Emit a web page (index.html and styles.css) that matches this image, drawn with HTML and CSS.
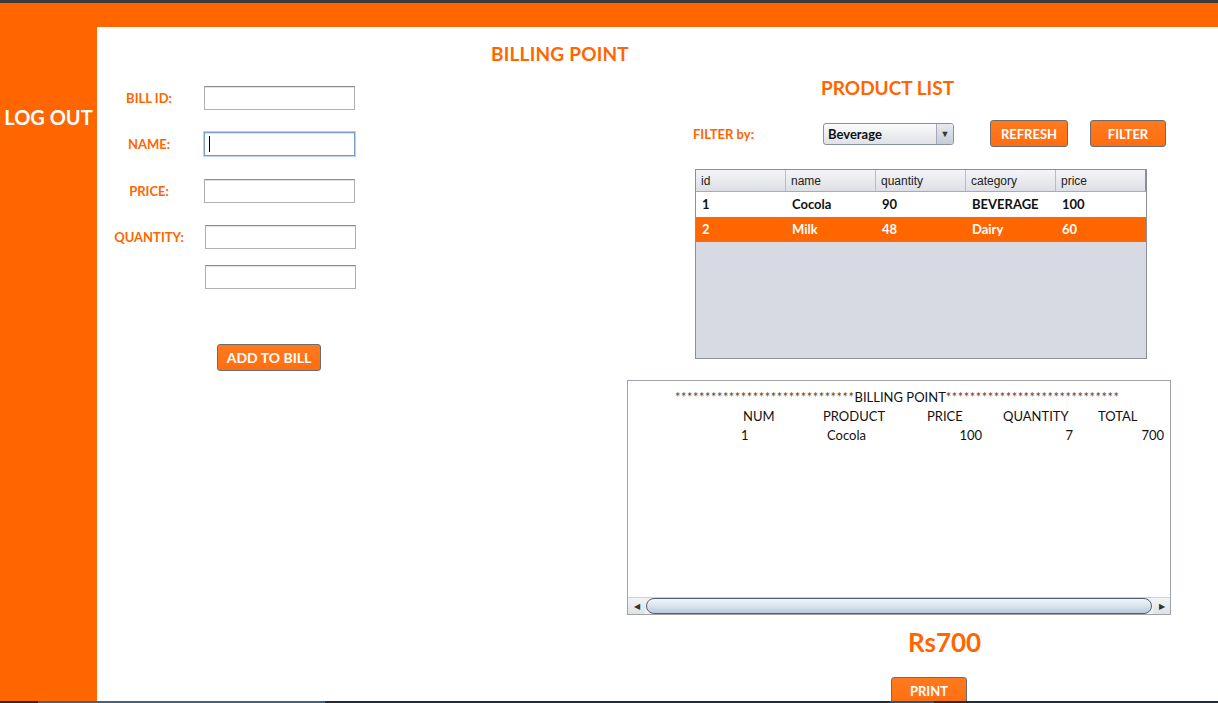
FILE: index.html
```html
<!DOCTYPE html>
<html>
<head>
<meta charset="utf-8">
<title>Billing Point</title>
<link rel="stylesheet" href="styles.css">
</head>
<body>
<div class="topbar"></div>
<div class="header"></div>
<div class="main">
  <aside class="sidebar">
    <div class="logout">LOG OUT</div>
  </aside>
  <section class="content">
    <div class="left-col">
      <h1 class="title">BILLING POINT</h1>
      <div class="form">
        <div class="row r1">
          <label class="lbl">BILL ID:</label>
          <div class="field"></div>
        </div>
        <div class="row r2">
          <label class="lbl">NAME:</label>
          <div class="field focused"><span class="caret"></span></div>
        </div>
        <div class="row r3">
          <label class="lbl">PRICE:</label>
          <div class="field"></div>
        </div>
        <div class="row r4">
          <label class="lbl">QUANTITY:</label>
          <div class="field shift"></div>
        </div>
        <div class="row r5">
          <span class="lbl"></span>
          <div class="field shift"></div>
        </div>
      </div>
      <button class="btn add-btn">ADD TO BILL</button>
    </div>

    <div class="right-col">
      <h2 class="subtitle">PRODUCT LIST</h2>
      <div class="filter-row">
        <span class="filter-lbl">FILTER by:</span>
        <div class="combo">
          <span class="combo-text">Beverage</span>
          <span class="combo-arrow">&#9660;</span>
        </div>
        <button class="btn refresh-btn">REFRESH</button>
        <button class="btn filter-btn">FILTER</button>
      </div>

      <div class="table">
        <div class="thead">
          <div class="th">id</div>
          <div class="th">name</div>
          <div class="th">quantity</div>
          <div class="th">category</div>
          <div class="th">price</div>
        </div>
        <div class="tr">
          <div class="td">1</div>
          <div class="td">Cocola</div>
          <div class="td">90</div>
          <div class="td">BEVERAGE</div>
          <div class="td">100</div>
        </div>
        <div class="tr selected">
          <div class="td">2</div>
          <div class="td">Milk</div>
          <div class="td">48</div>
          <div class="td">Dairy</div>
          <div class="td">60</div>
        </div>
      </div>

      <div class="bill">
        <div class="bill-body">
          <div class="stars-line">
            <span class="stars">******************************</span><span class="bill-title">BILLING POINT</span><span class="stars">*****************************</span>
          </div>
          <div class="bill-grid">
            <span></span>
            <span class="h-num">NUM</span>
            <span class="h-prod">PRODUCT</span>
            <span class="h-price">PRICE</span>
            <span class="h-qty">QUANTITY</span>
            <span class="h-total">TOTAL</span>
            <span></span>
            <span class="v-num">1</span>
            <span class="v-prod">Cocola</span>
            <span class="v-price">100</span>
            <span class="v-qty">7</span>
            <span class="v-total">700</span>
          </div>
        </div>
        <div class="hscroll">
          <span class="sb-btn">&#9664;</span>
          <span class="sb-thumb"></span>
          <span class="sb-btn">&#9654;</span>
        </div>
      </div>

      <div class="total">Rs700</div>
      <button class="btn print-btn">PRINT</button>
    </div>
  </section>
</div>
<div class="bottombar">
  <span class="bb-gap1"></span>
  <span class="bb-seg1"></span>
  <span class="bb-gap2"></span>
  <span class="bb-seg2"></span>
</div>
</body>
</html>
```

FILE: styles.css
```css
* { box-sizing: border-box; }

html, body {
  margin: 0;
  padding: 0;
  width: 1218px;
  height: 703px;
  overflow: hidden;
  background: #ffffff;
  font-family: "Lato", "Open Sans", sans-serif;
}

.topbar { height: 3px; background: #3c3c3c; }
.header { height: 24px; background: #ff6600; }

.main {
  display: flex;
  height: 674px;
}

.sidebar {
  width: 97px;
  flex: none;
  background: #ff6600;
  padding-top: 78px;
}

.logout {
  color: #ffffff;
  font-weight: 700;
  font-size: 20px;
  line-height: 24px;
  text-align: center;
  white-space: nowrap;
}

.content {
  flex: 1;
  display: flex;
  overflow: hidden;
  background: #fff;
}

/* ---------- left column ---------- */
.left-col {
  width: 530px;
  flex: none;
  display: flex;
  flex-direction: column;
  align-items: flex-start;
  padding-top: 15px;
}
.left-col > * { flex: none; }

.title {
  margin: 0 0 0 394px;
  color: #ff6600;
  font-size: 19px;
  line-height: 24px;
  font-weight: 700;
  letter-spacing: 0.2px;
  white-space: nowrap;
}

.form {
  margin-top: 20px;
  display: flex;
  flex-direction: column;
}

.row {
  display: flex;
  align-items: center;
  height: 24px;
}
.r2 { margin-top: 22px; }
.r3 { margin-top: 23px; }
.r4 { margin-top: 22px; }
.r5 { margin-top: 16px; }

.lbl {
  width: 74px;
  margin-left: 15px;
  text-align: center;
  color: #ff6600;
  font-size: 13px;
  font-weight: 700;
  white-space: nowrap;
}

.field {
  width: 151px;
  height: 24px;
  margin-left: 18px;
  background: #fff;
  border: 1px solid #b0b0b0;
  border-top-color: #8d8d8d;
  box-shadow: inset 0 1px 0 #e2e2e2;
  position: relative;
}
.field.shift { margin-left: 19px; }
.field.focused {
  border-color: #7a9cc7;
  box-shadow: 0 0 0 1px #b9d1ec, inset 0 1px 0 #e2e2e2;
}
.caret {
  position: absolute;
  left: 4px;
  top: 3px;
  width: 1px;
  height: 16px;
  background: #000;
}

.btn {
  display: block;
  background: linear-gradient(#ff7a1f, #ff6e10);
  color: #fff;
  font-family: "Lato", "Open Sans", sans-serif;
  font-weight: 700;
  border: 1px solid #6c6c6c;
  border-radius: 3px;
  padding: 0;
  cursor: pointer;
  white-space: nowrap;
}

.add-btn {
  margin-top: 55px;
  margin-left: 120px;
  width: 104px;
  height: 27px;
  font-size: 14px;
}

/* ---------- right column ---------- */
.right-col {
  width: 544px;
  flex: none;
  display: flex;
  flex-direction: column;
  align-items: flex-start;
  padding-top: 49px;
}
.right-col > * { flex: none; }

.subtitle {
  margin: 0 0 0 194px;
  color: #ff6600;
  font-size: 19px;
  line-height: 24px;
  font-weight: 700;
  white-space: nowrap;
}

.filter-row {
  margin-top: 20px;
  height: 27px;
  display: flex;
  align-items: center;
}

.filter-lbl {
  margin-left: 66px;
  width: 130px;
  color: #ff6600;
  font-size: 13px;
  font-weight: 700;
  white-space: nowrap;
}

.combo {
  width: 131px;
  height: 22px;
  display: flex;
  border: 1px solid #8c929b;
  border-radius: 3px;
  background: linear-gradient(#fbfbfc, #eceef1 50%, #dfe2e7);
  overflow: hidden;
}
.combo-text {
  flex: 1;
  padding-left: 4px;
  font-size: 13px;
  font-weight: 700;
  line-height: 20px;
  color: #111;
}
.combo-arrow {
  width: 17px;
  border-left: 1px solid #a3aab4;
  background: linear-gradient(#e7ebf0, #c4ccd7);
  color: #333;
  font-size: 9px;
  line-height: 20px;
  text-align: center;
}

.refresh-btn {
  margin-left: 36px;
  width: 78px;
  height: 27px;
  font-size: 13px;
}
.filter-btn {
  margin-left: 22px;
  width: 76px;
  height: 27px;
  font-size: 13px;
}

.table {
  margin-top: 22px;
  margin-left: 68px;
  width: 452px;
  height: 190px;
  border: 1px solid #8b8f98;
  background: #d7dae2;
}
.thead {
  display: flex;
  height: 22px;
  background: linear-gradient(#f4f5f7, #e6e8ec 60%, #dcdfe4);
  border-bottom: 1px solid #a7abb3;
}
.th {
  width: 90px;
  padding-left: 5px;
  font-family: "Liberation Sans", Arial, sans-serif;
  font-size: 12px;
  line-height: 22px;
  color: #222;
  border-right: 1px solid #b9bcc3;
}
.th:last-child { border-right: 1px solid #8b8f98; }

.tr {
  display: flex;
  height: 25px;
  background: #fff;
}
.tr.selected { background: #ff6600; }
.td {
  width: 90px;
  padding-left: 6px;
  font-size: 13px;
  font-weight: 700;
  line-height: 25px;
  color: #111;
  white-space: nowrap;
}
.tr.selected .td { color: #fff; }

.bill {
  margin-top: 21px;
  width: 544px;
  height: 235px;
  border: 1px solid #9ea2a9;
  display: flex;
  flex-direction: column;
  background: #fff;
}
.bill-body {
  flex: 1;
  padding-top: 7px;
  font-size: 13px;
  color: #111;
}
.stars-line {
  display: flex;
  align-items: center;
  height: 19px;
  padding-left: 47px;
  white-space: nowrap;
}
.stars {
  font-size: 13px;
  letter-spacing: 0.46px;
  color: #6e4420;
  line-height: 19px;
}
.bill-title { font-size: 13px; line-height: 19px; }

.bill-grid {
  display: grid;
  grid-template-columns: 110px 80px 100px 70px 90px 90px;
  grid-auto-rows: 19px;
  line-height: 19px;
  white-space: nowrap;
}
.h-num { padding-left: 5px; }
.h-prod { padding-left: 5px; }
.h-price { padding-left: 9px; }
.h-qty { padding-left: 15px; }
.h-total { padding-left: 20px; }
.v-num { padding-left: 3px; }
.v-prod { padding-left: 9px; }
.v-price { text-align: right; padding-right: 6px; }
.v-qty { text-align: right; padding-right: 5px; }
.v-total { text-align: right; padding-right: 4px; }

.hscroll {
  height: 17px;
  flex: none;
  display: flex;
  align-items: stretch;
  background: #eef0f2;
  border-top: 1px solid #cfd3d8;
}
.sb-btn {
  width: 17px;
  font-size: 8px;
  line-height: 16px;
  text-align: center;
  color: #333;
  background: linear-gradient(#f3f4f6, #dfe2e6);
}
.sb-thumb {
  flex: 1;
  margin: 0 1px;
  border: 1px solid #4f5e70;
  border-radius: 8px;
  background: linear-gradient(#f1f5f9, #d9e4ee 50%, #b8cadb);
}

.total {
  margin-top: 12px;
  margin-left: 281px;
  color: #ff6600;
  font-size: 26px;
  line-height: 30px;
  font-weight: 700;
}

.print-btn {
  margin-top: 20px;
  margin-left: 264px;
  width: 76px;
  height: 28px;
  font-size: 13px;
}

.bottombar {
  height: 2px;
  display: flex;
  background: #262c33;
}
.bb-gap1 { width: 38px; }
.bb-seg1 { width: 287px; background: #4a6175; }
.bb-gap2 { width: 565px; }
.bb-seg2 { width: 44px; background: #1c5a8c; }
```
